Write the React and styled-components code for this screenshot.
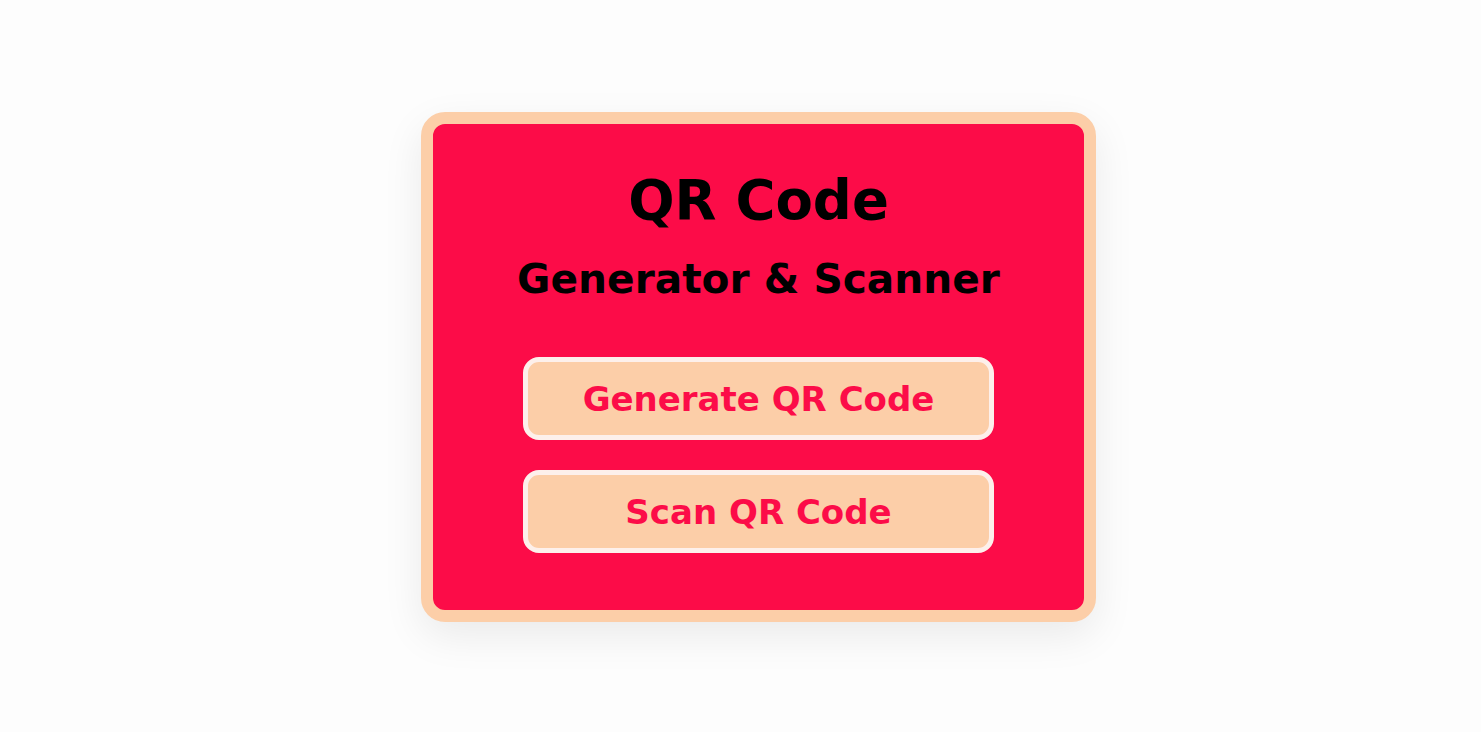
import React from "react";
import styled, { createGlobalStyle } from "styled-components";

const Global = createGlobalStyle`
  html, body { margin: 0; padding: 0; background: #fdfdfd; }
  body { font-family: "DejaVu Sans", "Open Sans", "Liberation Sans", sans-serif; }
`;

const Page = styled.div`
  min-height: 732px;
  display: flex;
  align-items: center;
  justify-content: center;
  padding-left: 36px;
  padding-top: 2px;
  box-sizing: border-box;
`;

const Card = styled.div`
  width: 675px;
  height: 510px;
  box-sizing: border-box;
  background: #fc0c48;
  border: 12px solid #fccea8;
  border-radius: 24px;
  box-shadow: 0 14px 40px rgba(0, 0, 0, 0.08);
  display: flex;
  flex-direction: column;
  align-items: center;
  padding-top: 36px;
`;

const Title = styled.h1`
  margin: 0;
  font-size: 54.5px;
  font-weight: 700;
  line-height: 80px;
  color: #000;
`;

const Subtitle = styled.h2`
  margin: 9px 0 0;
  font-size: 40.7px;
  font-weight: 700;
  line-height: 60px;
  color: #000;
`;

const Buttons = styled.div`
  display: flex;
  flex-direction: column;
  gap: 30px;
  margin-top: 48px;
`;

const Button = styled.button`
  width: 471px;
  height: 83px;
  box-sizing: border-box;
  background: #fccea8;
  border: 5px solid #fdf0eb;
  border-radius: 16px;
  color: #fc0c48;
  font-family: inherit;
  font-size: 34px;
  font-weight: 700;
  cursor: pointer;
`;

export default function App() {
  return (
    <>
      <Global />
      <Page>
        <Card>
          <Title>QR Code</Title>
          <Subtitle>Generator &amp; Scanner</Subtitle>
          <Buttons>
            <Button>Generate QR Code</Button>
            <Button>Scan QR Code</Button>
          </Buttons>
        </Card>
      </Page>
    </>
  );
}
